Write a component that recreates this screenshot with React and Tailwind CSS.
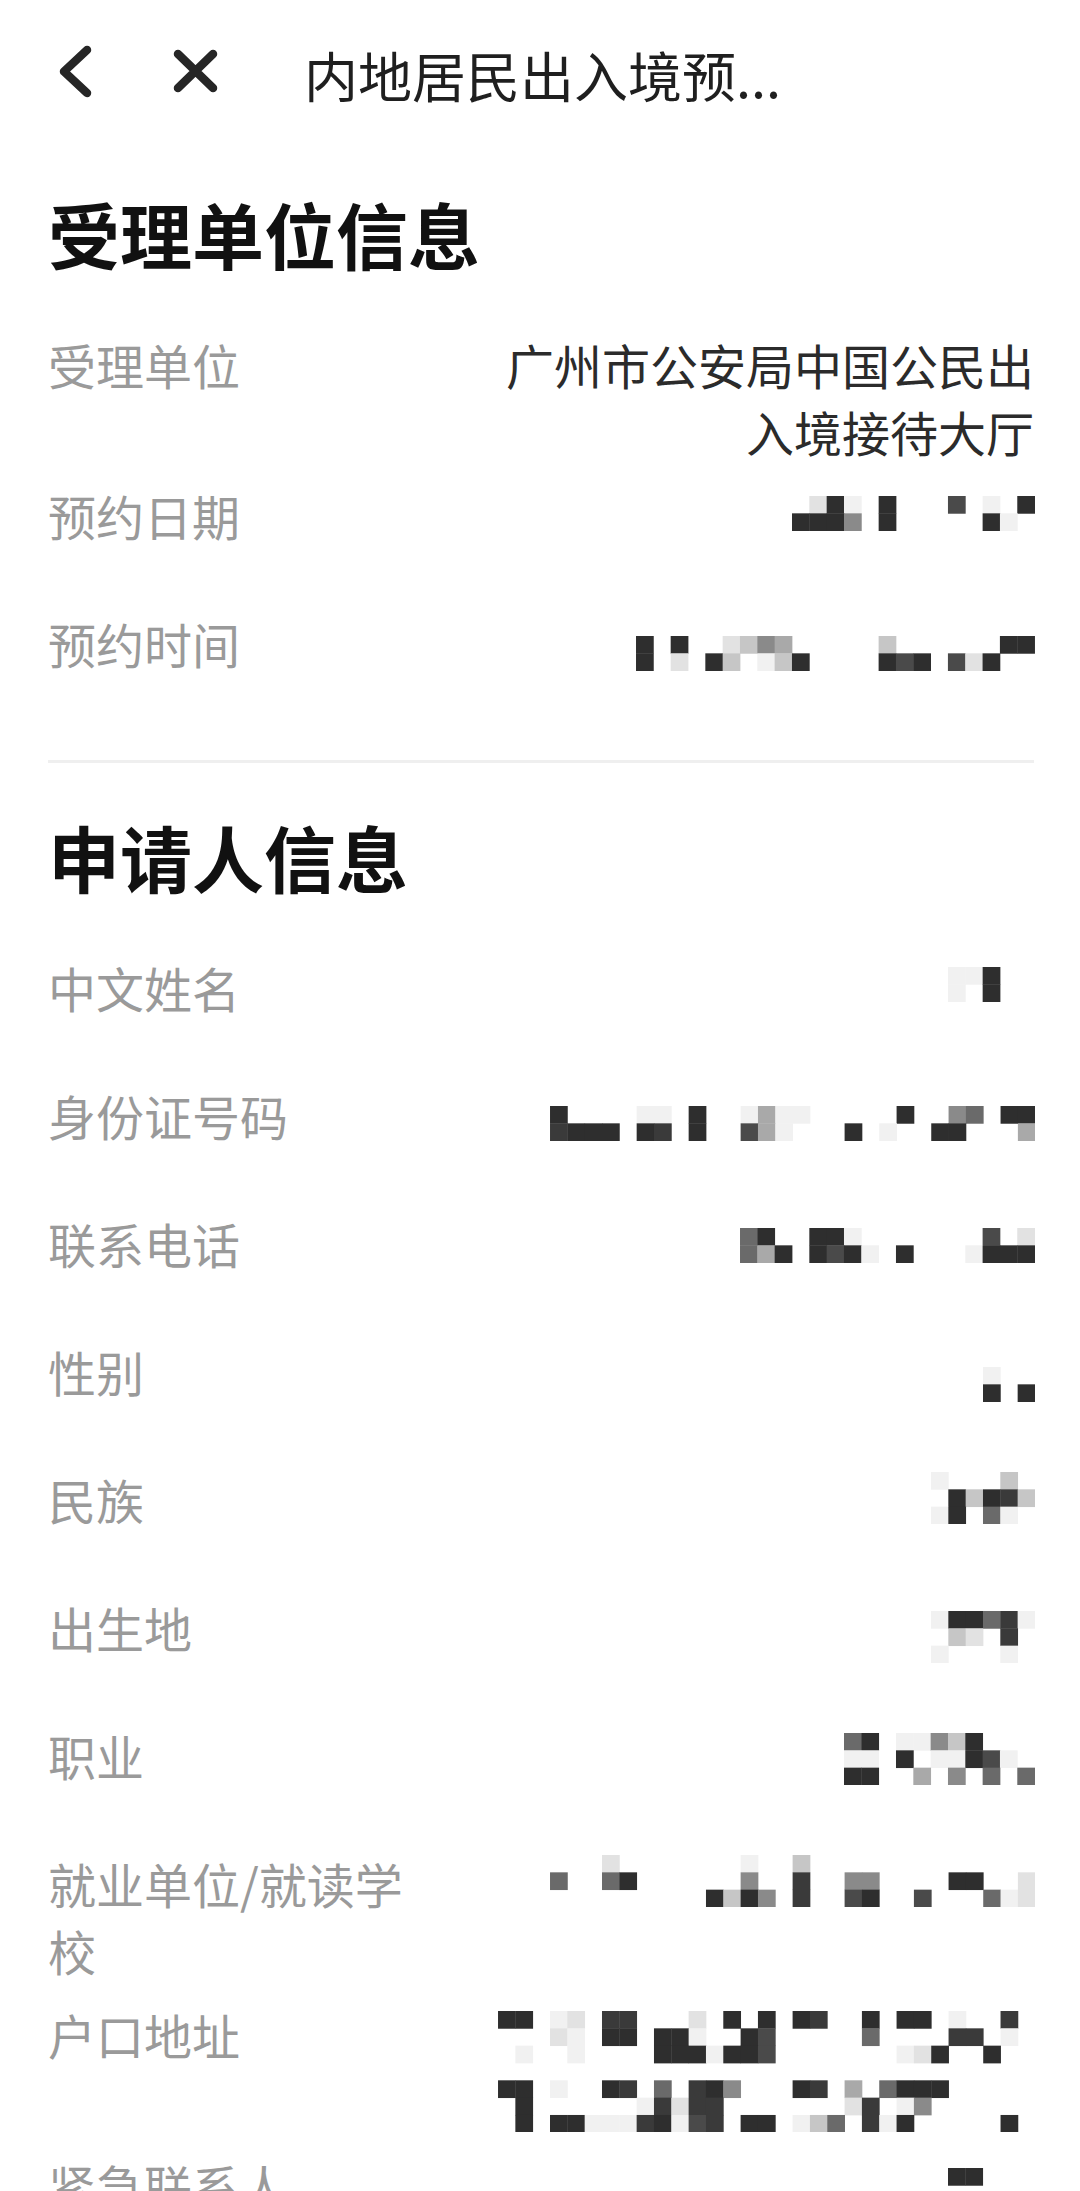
import React from 'react';

// pixelated (censored) values, one char per cell: '.' blank, 1 light .. 9 dark
const SHADES = {
  '1': '#f1f1f1',
  '2': '#e2e2e2',
  '3': '#c6c6c6',
  '4': '#a9a9a9',
  '5': '#8a8a8a',
  '6': '#6a6a6a',
  '7': '#4a4a4a',
  '8': '#3a3a3a',
  '9': '#2e2e2e',
};
const CELL = 17.33;

const Mosaic = ({ rows, className = '' }) => {
  const w = rows[0].length * CELL;
  const h = rows.length * CELL;
  return (
    <svg width={w} height={h} viewBox={`0 0 ${w} ${h}`} className={`block ml-auto -mr-px ${className}`}>
      {rows.flatMap((r, y) =>
        [...r].map((c, x) =>
          c === '.' ? null : (
            <rect key={`${x}-${y}`} x={x * CELL} y={y * CELL} width={CELL + 0.4} height={CELL + 0.4} fill={SHADES[c]} />
          )
        )
      )}
    </svg>
  );
};

const unitRows = [
  { label: '受理单位', value: '广州市公安局中国公民出入境接待大厅' },
  { label: '预约日期', mosaic: ['.291.9...7.1.9', '9995.9.....91.'], mt: 'mt-[14px]' },
  { label: '预约时间', mosaic: ['9.9..2354.....3......99', '9.2.93.139....979.729..'], mt: 'mt-[26px]' },
];

const applicantRows = [
  { label: '中文姓名', mosaic: ['119..', '1.9..'], mt: 'mt-[13px]' },
  {
    label: '身份证号码',
    mosaic: ['9....11.9..1411.....9..56.99', '8999.98.9..741...9.1..99...4'],
    mt: 'mt-[24px]',
  },
  { label: '联系电话', mosaic: ['69..991.......7.2', '649.9791.9...1999'], mt: 'mt-[18px]' },
  { label: '性别', mosaic: ['1..', '9.9'], mt: 'mt-[29px]' },
  { label: '民族', mosaic: ['1...3.', '.93983', '19.61.'], mt: 'mt-[6px]' },
  { label: '出生地', mosaic: ['199681', '.32.8.', '1...1.'], mt: 'mt-[17px]' },
  { label: '职业', mosaic: ['69.11539...', '11.9.11971.', '99..4.5.6.6'], mt: 'mt-[11px]' },
  {
    label: '就业单位/就读学校',
    mosaic: [
      '...2.......1..3.............',
      '6..69......5..8..55....99..2',
      '.........9395.8..79..7...612',
    ],
    mt: 'mt-[5px]',
  },
  {
    label: '户口地址',
    mosaic: [
      '99.12.88...2.9.9.98..9.99.1..8.',
      '...21.99.991..97.....6....88.1.',
      '.1..1....9991997.......129..9..',
      '...............................',
      '99.1..98.6.895...98.4.6999.....',
      '.9......18288.......28.15......',
      '.9.9911189178.99.136.819.....9.',
    ],
    mt: 'mt-[10px]',
    tall: true,
  },
  { label: '紧急联系人', mosaic: ['99...', '.....'], mt: 'mt-[16px]' },
];

const InfoRow = ({ label, value, mosaic, mt, tall }) => (
  <div className="flex items-start min-h-[128px] pt-[6px] pb-[11px]">
    <div className="w-[372px] shrink-0 text-[48px] leading-[67px] text-[#9a9a9a]">{label}</div>
    <div className={`flex-1 ml-[60px] text-right text-[48px] leading-[67px] text-[#2b2b2b] ${tall ? 'h-[134px]' : ''}`}>
      {value ? value : <Mosaic rows={mosaic} className={mt} />}
    </div>
  </div>
);

export default function App() {
  return (
    <div className="min-h-screen bg-white font-['Noto_Sans_CJK_SC','Noto_Sans',sans-serif]">
      {/* top bar */}
      <header className="flex items-center h-[148px] pl-[56px]">
        <svg
          width="40"
          height="60"
          viewBox="0 0 40 60"
          fill="none"
          stroke="#262626"
          strokeWidth="8.5"
          strokeLinecap="round"
          strokeLinejoin="round"
          className="overflow-visible shrink-0"
        >
          <path d="M31 6 L8 27.5 L31 49" />
        </svg>
        <svg
          width="60"
          height="60"
          viewBox="0 0 60 60"
          fill="none"
          stroke="#262626"
          strokeWidth="8.5"
          strokeLinecap="round"
          className="overflow-visible shrink-0 ml-[74px]"
        >
          <path d="M8 10 L43 44 M43 10 L8 44" />
        </svg>
        <div className="ml-[74px] text-[54px] leading-[75px] text-[#1f1f1f] whitespace-nowrap">内地居民出入境预...</div>
      </header>

      <main className="pl-[48px] pr-[46px]">
        <h2 className="mt-[35px] mb-[42px] text-[72px] leading-[100px] font-bold text-[#111111]">受理单位信息</h2>
        {unitRows.map((r) => (
          <InfoRow key={r.label} {...r} />
        ))}

        <div className="mt-[28px] h-[3px] bg-[#efefef]" />

        <h2 className="mt-[43px] mb-[42px] text-[72px] leading-[100px] font-bold text-[#111111]">申请人信息</h2>
        {applicantRows.map((r) => (
          <InfoRow key={r.label} {...r} />
        ))}
      </main>
    </div>
  );
}
